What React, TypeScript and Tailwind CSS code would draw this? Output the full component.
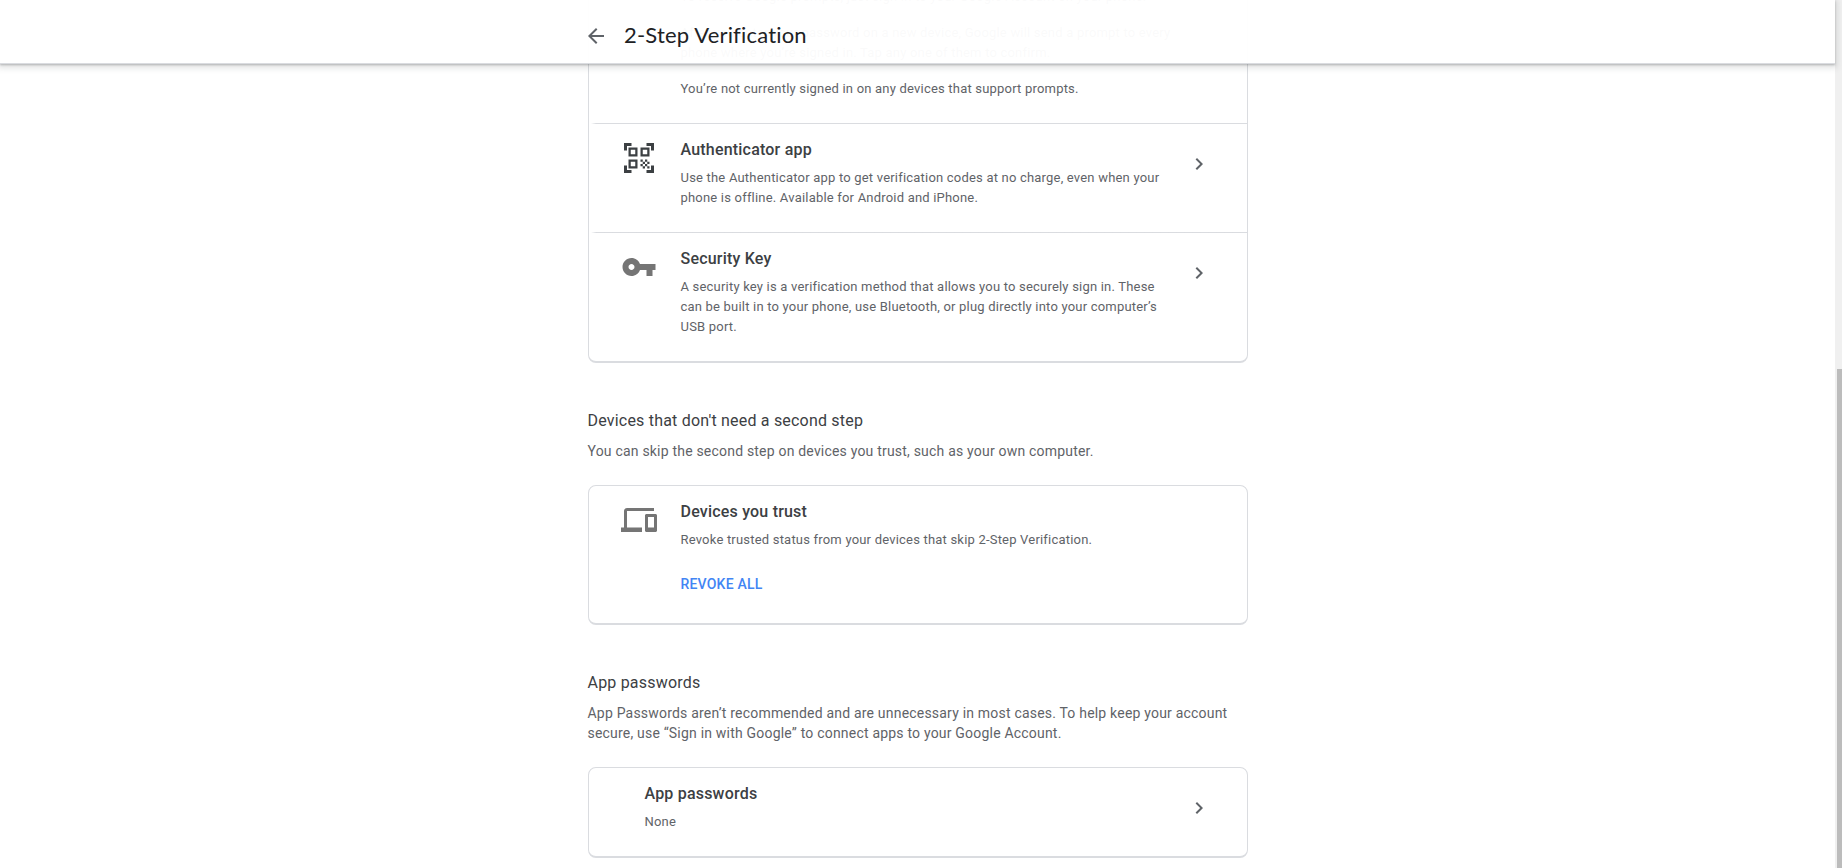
import type { ReactNode } from "react";

const QR =
  "M9.5 6.5v3h-3v-3h3M11 5H5v6h6V5zm-1.5 9.5v3h-3v-3h3M11 13H5v6h6v-6zm6.5-6.5v3h-3v-3h3M19 5h-6v6h6V5zm-6 8h1.5v1.5H13V13zm1.5 1.5H16V16h-1.5v-1.5zM16 13h1.5v1.5H16V13zm-3 3h1.5v1.5H13V16zm1.5 1.5H16V19h-1.5v-1.5zM16 16h1.5v1.5H16V16zm1.5-1.5H19V16h-1.5v-1.5zm0 3H19V19h-1.5v-1.5zM22 7h-2V4h-3V2h5v5zm0 15v-5h-2v3h-3v2h5zM2 22h5v-2H4v-3H2v5zM2 2v5h2V4h3V2H2z";
const KEY =
  "M12.65 10C11.83 7.67 9.61 6 7 6c-3.31 0-6 2.69-6 6s2.69 6 6 6c2.61 0 4.83-1.67 5.65-4H17v4h4v-4h2v-4H12.65zM7 14c-1.1 0-2-.9-2-2s.9-2 2-2 2 .9 2 2-.9 2-2 2z";
const DEVICES =
  "M4 6h18V4H4c-1.1 0-2 .9-2 2v11H0v3h14v-3H4V6zm19 2h-6c-.55 0-1 .45-1 1v10c0 .55.45 1 1 1h6c.55 0 1-.45 1-1V9c0-.55-.45-1-1-1zm-1 9h-4v-7h4v7z";
const CHEVRON = "M10 6L8.59 7.41 13.17 12l-4.58 4.59L10 18l6-6z";
const BACK = "M20 11H7.83l5.59-5.59L12 4l-8 8 8 8 1.41-1.41L7.83 13H20v-2z";

function Icon({ d, className }: { d: string; className: string }) {
  return (
    <svg viewBox="0 0 24 24" fill="currentColor" className={className}>
      <path d={d} />
    </svg>
  );
}

function Item({
  icon,
  iconClass = "text-[#757575]",
  title,
  chevron,
  children,
}: {
  icon?: string;
  iconClass?: string;
  title: string;
  chevron?: boolean;
  children: ReactNode;
}) {
  return (
    <div className="flex items-start pb-6">
      {icon ? (
        <div className={`w-[92px] shrink-0 pt-4 pl-8 ${iconClass}`}>
          <Icon d={icon} className="size-9" />
        </div>
      ) : (
        <div className="w-14 shrink-0" />
      )}
      <div className="w-[492px] pt-3.5">
        <h3 className="text-[16px] leading-6 font-medium tracking-[0.2px] text-[#3c4043]">{title}</h3>
        <div className="mt-1.5 text-[13px] leading-5 tracking-[0.2px] text-[#5f6368]">{children}</div>
      </div>
      {chevron && (
        <div className="ml-auto pt-7 pr-9 text-[#5f6368]">
          <Icon d={CHEVRON} className="size-6" />
        </div>
      )}
    </div>
  );
}

function Divider() {
  return <div className="ml-[2px] h-px bg-linear-to-r from-transparent via-[#dadce0] via-[5px] to-[#dadce0]" />;
}

function Section({ title, text, children }: { title: string; text: string; children: ReactNode }) {
  return (
    <section className="mt-[46px]">
      <h2 className="text-[16px] leading-6 tracking-[0.2px] text-[#3c4043]">{title}</h2>
      <p className="mt-2 text-[14px] leading-5 tracking-[0.2px] text-[#5f6368]">{text}</p>
      <div className="mt-6 rounded-lg border border-b-2 border-[#dadce0]">{children}</div>
    </section>
  );
}

export default function App() {
  return (
    <div className="relative flex h-[868px] w-full overflow-hidden bg-white font-['Roboto',sans-serif]">
      <header className="absolute top-0 left-0 z-10 h-16 w-[1835px] border-b border-[#dadce0] bg-white/97 shadow-[0_1px_2px_0_rgba(60,64,67,0.3),0_2px_6px_2px_rgba(60,64,67,0.15)]">
        <div className="flex h-full items-center pt-[9px] pl-[584px]">
          <Icon d={BACK} className="size-6 text-[#5f6368]" />
          <h1 className="ml-4 pb-[3px] font-['Lato',sans-serif] text-[22px] leading-7 tracking-[0.18px] text-[#202124]">
            2-Step Verification
          </h1>
        </div>
      </header>

      <main className="flex flex-1 justify-center">
        <div className="-mt-[13px] w-[660px]">
          <div className="rounded-b-lg border border-t-0 border-b-2 border-[#dadce0]">
            <div className="ml-[92px] w-[494px] pb-6 text-[13px] leading-5 tracking-[0.2px] text-[#5f6368]">
              <p>To receive Google prompts, just sign in to your Google Account on your phone.</p>
              <p className="mt-4">
                After you enter your password on a new device, Google will send a prompt to every phone where you’re
                signed in. Tap any one of them to confirm.
              </p>
              <p className="mt-4">You’re not currently signed in on any devices that support prompts.</p>
            </div>
            <Divider />
            <Item icon={QR} iconClass="text-[#3c4043]" title="Authenticator app" chevron>
              Use the Authenticator app to get verification codes at no charge, even when your phone is offline.
              Available for Android and iPhone.
            </Item>
            <Divider />
            <Item icon={KEY} title="Security Key" chevron>
              A security key is a verification method that allows you to securely sign in. These can be built in to
              your phone, use Bluetooth, or plug directly into your computer’s USB port.
            </Item>
          </div>

          <Section
            title="Devices that don't need a second step"
            text="You can skip the second step on devices you trust, such as your own computer."
          >
            <Item icon={DEVICES} title="Devices you trust">
              <p>Revoke trusted status from your devices that skip 2-Step Verification.</p>
              <button className="mt-6 mb-[5px] block text-[14px] leading-5 font-medium tracking-[0.2px] text-[#4285f4]">
                REVOKE ALL
              </button>
            </Item>
          </Section>

          <Section
            title="App passwords"
            text="App Passwords aren’t recommended and are unnecessary in most cases. To help keep your account secure, use “Sign in with Google” to connect apps to your Google Account."
          >
            <Item title="App passwords" chevron>
              None
            </Item>
          </Section>
        </div>
      </main>

      <div className="flex w-[7px] flex-col bg-[#f0f0f0] pt-[369px] pl-[2px]">
        <div className="flex-1 bg-[#bcbcbc]" />
      </div>
    </div>
  );
}
